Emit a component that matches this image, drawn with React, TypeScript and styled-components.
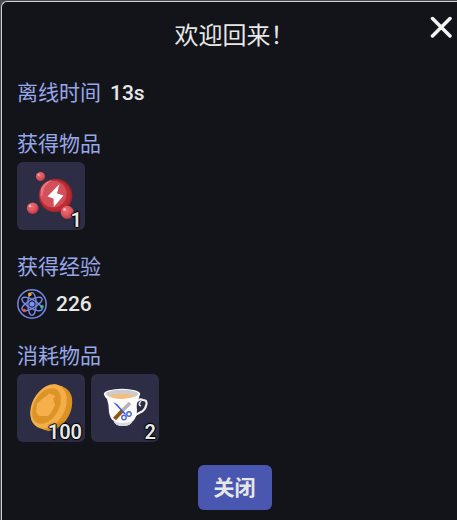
import React from "react";
import styled, { createGlobalStyle } from "styled-components";

const GlobalStyle = createGlobalStyle`
  *, *::before, *::after { box-sizing: border-box; }
  html { background: #4a4a52; }
  body {
    margin: 0;
    overflow: hidden;
    color: #e7e7e7;
    font-family: Roboto, "Noto Sans CJK SC", sans-serif;
    font-size: 21px;
    line-height: 28px;
  }
`;

const Page = styled.div`
  display: flex;
  flex-direction: column;
  min-height: 100vh;
  padding: 1px 0 0 1px;
`;

const Dialog = styled.section`
  flex: 1;
  display: flex;
  flex-direction: column;
  gap: 23px;
  padding: 14px 5px 10px 15px;
  border: solid #d0d0d0;
  border-width: 1px 0 0 1px;
  border-radius: 6px 0 0 0;
  background: #131419;
`;

const Header = styled.header`
  display: grid;
  grid-template-columns: 22px 1fr 22px;
  height: 40px;
`;

const Title = styled.h1`
  grid-column: 2;
  margin: 0;
  font-size: 24px;
  font-weight: 400;
  line-height: 40px;
  text-align: center;
`;

const CloseIconButton = styled.button`
  align-self: start;
  width: 22px;
  height: 22px;
  padding: 0;
  border: 0;
  background: none;
  color: #f4f4f4;
  cursor: pointer;

  svg { display: block; }
`;

const Section = styled.section<{ $gap?: number }>`
  display: flex;
  flex-direction: column;
  gap: ${({ $gap = 4 }) => $gap}px;
`;

const Label = styled.h2`
  margin: 0;
  color: #98a7e9;
  font-size: 21px;
  font-weight: 400;
  line-height: 28px;
`;

const Row = styled.div`
  display: flex;
  align-items: center;
  gap: 9px;
`;

const Value = styled.span`
  font-weight: 500;
`;

const Items = styled.ul`
  display: flex;
  flex-wrap: wrap;
  gap: 6px;
  margin: 0;
  padding: 0;
  list-style: none;
`;

const Tile = styled.li`
  position: relative;
  width: 68px;
  height: 68px;
  border-radius: 6px;
  background: #2e2d46;

  svg { display: block; }
`;

const Count = styled.span`
  position: absolute;
  right: 3px;
  bottom: 0;
  font-size: 20px;
  font-weight: 600;
  line-height: 20px;
  text-shadow: -1px 0 #000, 1px 0 #000, 0 1px #000, 0 -1px #000, 0 0 3px #000;
`;

const ConfirmButton = styled.button`
  align-self: center;
  padding: 9px 16px 8px;
  border: 0;
  border-radius: 6px;
  background: #4957b0;
  color: #e7e7e7;
  font: inherit;
  font-weight: 700;
  cursor: pointer;
`;

const CloseIcon = () => (
  <svg width="22" height="22" viewBox="0 0 22 22" aria-hidden="true">
    <path d="M2.5 2.500L20 20M20 2.500L2.500 20" stroke="currentColor" strokeWidth="3.500" strokeLinecap="round" />
  </svg>
);

const EssenceIcon = () => (
  <svg width="67" height="67" viewBox="0 0 67 67" aria-hidden="true">
    <defs>
      <radialGradient id="bead" cx="0.4" cy="0.35" r="0.65">
        <stop offset="0" stopColor="#ee7079" />
        <stop offset="0.65" stopColor="#dc5159" />
        <stop offset="1" stopColor="#b93940" />
      </radialGradient>
    </defs>
    <circle cx="38.5" cy="33.5" r="16.8" fill="#9f242c" />
    <circle cx="38" cy="33.2" r="15.5" fill="#bd2c35" />
    <circle cx="36.2" cy="32" r="13.3" fill="#d3505a" />
    <path d="M24 27c2-5 6-8 11-9-3 3-7 5-8 9-1 3-1 7-3 8z" fill="#e27882" />
    <path d="M42.5 22L30.5 34.5L36.5 36.5L36.8 45L46.5 33.5L40 31.5z" fill="#fff" />
    <circle cx="23.5" cy="14.5" r="4.6" fill="url(#bead)" />
    <circle cx="15.7" cy="46.2" r="5.8" fill="url(#bead)" />
    <circle cx="50.3" cy="50.4" r="6.6" fill="url(#bead)" />
    <g fill="#f8b5b8">
      <circle cx="21.6" cy="12.8" r="1" />
      <circle cx="13" cy="44" r="1.3" />
      <circle cx="47.5" cy="47.5" r="1.4" />
    </g>
  </svg>
);

const AtomIcon = () => (
  <svg width="30" height="30" viewBox="0 0 30 30" aria-hidden="true">
    <g fill="none" stroke="#7788e6">
      <circle cx="15" cy="15" r="14.2" strokeWidth="1.5" />
      <g strokeWidth="1.4">
        <ellipse cx="15" cy="15" rx="4.2" ry="11.4" />
        <ellipse cx="15" cy="15" rx="4.2" ry="11.4" transform="rotate(60 15 15)" />
        <ellipse cx="15" cy="15" rx="4.2" ry="11.4" transform="rotate(120 15 15)" />
      </g>
    </g>
    <circle cx="15" cy="15" r="2.6" fill="#7e91ef" />
    <circle cx="12.8" cy="5.4" r="1.8" fill="#f4a51c" />
    <circle cx="25" cy="17.8" r="1.8" fill="#32bd9b" />
    <circle cx="7.3" cy="21.5" r="1.8" fill="#e0545c" />
  </svg>
);

const CoinIcon = () => (
  <svg width="67" height="67" viewBox="0 0 67 67" aria-hidden="true">
    <path d="M37 10L46 12.500L46 30L32 57L23 54z" fill="#db9223" />
    <ellipse cx="37" cy="34.500" rx="16.500" ry="23.500" fill="#db9223" transform="rotate(28 37 34.500)" />
    <ellipse cx="31.500" cy="32.500" rx="16.500" ry="23.500" fill="#f4ae49" transform="rotate(28 31.500 32.500)" />
    <ellipse cx="29.500" cy="32" rx="12.300" ry="19.300" fill="#dc9427" transform="rotate(30 29.500 32)" />
    <path d="M28.500 22.500L31 21L32 19L34 20.500L36 20.500L38.500 22.500L36 24.500L38 31L34 39L31 42L22 42L19 38L20 30L24 26z" fill="#f5b04c" />
  </svg>
);

const TeaIcon = () => (
  <svg width="67" height="67" viewBox="0 0 67 67" aria-hidden="true">
    <path d="M45.5 28Q48 24 52 26Q56 26 55.5 30Q54 37 49 38.5Q46 40 43 42" fill="none" stroke="#f2f2f5" strokeWidth="2.2" />
    <path d="M50 27Q46.5 31 50 32" fill="none" stroke="#e5e5eb" strokeWidth="1.5" />
    <path d="M13 20Q13.5 23 16 25Q18 31 18 38Q19 45 23 47Q24 52 32 52Q39 52 41 48Q46 44 46 36Q45 29 48 24L49 19z" fill="#fbfbfc" />
    <path d="M22.5 47Q31 51 41.5 47Q40 52 32 52Q24 52 22.5 47z" fill="#dadade" />
    <ellipse cx="31" cy="20" rx="18.2" ry="5.3" fill="#fff" />
    <ellipse cx="31" cy="20" rx="16.3" ry="4.2" fill="#cccbcf" />
    <path d="M17 22Q30 18 45 22Q38 25 31 25Q22 25 17 22z" fill="#f4bf78" />
    <path d="M39 29L31 37" stroke="#b4b4b8" strokeWidth="3.5" />
    <path d="M31 37L23.5 45" stroke="#92540f" strokeWidth="4" />
    <path d="M22 28L26 30L36 41L33 40z" fill="#4059d5" />
    <g fill="none" stroke="#4866e0" strokeWidth="1.4">
      <circle cx="33" cy="43.5" r="2.2" />
      <circle cx="38" cy="40" r="2.2" />
    </g>
  </svg>
);

export default function App() {
  return (
    <>
      <GlobalStyle />
      <Page>
        <Dialog role="dialog" aria-labelledby="welcome-title">
          <Header>
            <Title id="welcome-title">欢迎回来！</Title>
            <CloseIconButton type="button" aria-label="关闭">
              <CloseIcon />
            </CloseIconButton>
          </Header>
          <Row>
            <Label>离线时间</Label>
            <Value>13s</Value>
          </Row>
          <Section>
            <Label>获得物品</Label>
            <Items>
              <Tile><EssenceIcon /><Count>1</Count></Tile>
            </Items>
          </Section>
          <Section $gap={8}>
            <Label>获得经验</Label>
            <Row><AtomIcon /><Value>226</Value></Row>
          </Section>
          <Section>
            <Label>消耗物品</Label>
            <Items>
              <Tile><CoinIcon /><Count>100</Count></Tile>
              <Tile><TeaIcon /><Count>2</Count></Tile>
            </Items>
          </Section>
          <ConfirmButton type="button">关闭</ConfirmButton>
        </Dialog>
      </Page>
    </>
  );
}
